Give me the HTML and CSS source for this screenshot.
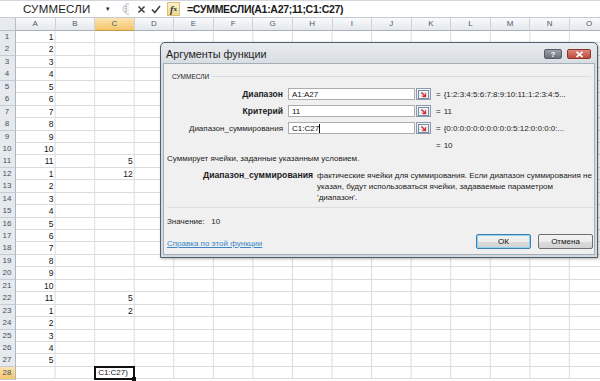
FILE: index.html
```html
<!DOCTYPE html>
<html lang="ru">
  <head>
    <meta charset="UTF-8" />
    <title>Аргументы функции</title>
    <link rel="stylesheet" href="styles.css">
  </head>
  <body>
    <div class="formula-bar">
      <div class="name-box">
        <span class="name-text">СУММЕСЛИ</span>
        <span class="name-arrow">▼</span>
      </div>
      <svg class="grip" width="12" height="14" viewBox="0 0 12 14">
        <path d="M11 1.5 A6 5.5 0 0 0 11 12.5" fill="#f1f2f4" stroke="#c3c8ce" />
        <circle cx="8" cy="4.5" r="0.8" fill="#8c949c" />
        <circle cx="8" cy="7" r="0.8" fill="#8c949c" />
        <circle cx="8" cy="9.5" r="0.8" fill="#8c949c" />
      </svg>
      <div class="fx-buttons">
        <svg class="fx-btn" width="9" height="9" viewBox="0 0 9 9">
          <path d="M1.5 1.5 L7.5 7.5 M7.5 1.5 L1.5 7.5" stroke="#3c4247" stroke-width="1.6" />
        </svg>
        <svg class="fx-btn" width="10" height="9" viewBox="0 0 10 9">
          <path d="M1 4.5 L3.8 7.5 L9 1" fill="none" stroke="#3c4247" stroke-width="1.6" />
        </svg>
        <span class="fx-box"><i>f</i><sub>x</sub></span>
      </div>
      <div class="formula">=СУММЕСЛИ(A1:A27;11;C1:C27)</div>
    </div>

    <div class="sheet">
      <div class="head-row">
        <div class="corner"></div>
        <div class="ch">A</div>
        <div class="ch">B</div>
        <div class="ch active">C</div>
        <div class="ch">D</div>
        <div class="ch">E</div>
        <div class="ch">F</div>
        <div class="ch">G</div>
        <div class="ch">H</div>
        <div class="ch">I</div>
        <div class="ch">J</div>
        <div class="ch">K</div>
        <div class="ch">L</div>
        <div class="ch">M</div>
        <div class="ch">N</div>
        <div class="ch">O</div>
      </div>
      <div class="rows">
        <div class="row"><div class="rh">1</div><div class="cell">1</div></div>
        <div class="row"><div class="rh">2</div><div class="cell">2</div></div>
        <div class="row"><div class="rh">3</div><div class="cell">3</div></div>
        <div class="row"><div class="rh">4</div><div class="cell">4</div></div>
        <div class="row"><div class="rh">5</div><div class="cell">5</div></div>
        <div class="row"><div class="rh">6</div><div class="cell">6</div></div>
        <div class="row"><div class="rh">7</div><div class="cell">7</div></div>
        <div class="row"><div class="rh">8</div><div class="cell">8</div></div>
        <div class="row"><div class="rh">9</div><div class="cell">9</div></div>
        <div class="row"><div class="rh">10</div><div class="cell">10</div></div>
        <div class="row"><div class="rh">11</div><div class="cell">11</div><div class="cell"></div><div class="cell">5</div></div>
        <div class="row"><div class="rh">12</div><div class="cell">1</div><div class="cell"></div><div class="cell">12</div></div>
        <div class="row"><div class="rh">13</div><div class="cell">2</div></div>
        <div class="row"><div class="rh">14</div><div class="cell">3</div></div>
        <div class="row"><div class="rh">15</div><div class="cell">4</div></div>
        <div class="row"><div class="rh">16</div><div class="cell">5</div></div>
        <div class="row"><div class="rh">17</div><div class="cell">6</div></div>
        <div class="row"><div class="rh">18</div><div class="cell">7</div></div>
        <div class="row"><div class="rh">19</div><div class="cell">8</div></div>
        <div class="row"><div class="rh">20</div><div class="cell">9</div></div>
        <div class="row"><div class="rh">21</div><div class="cell">10</div></div>
        <div class="row"><div class="rh">22</div><div class="cell">11</div><div class="cell"></div><div class="cell">5</div></div>
        <div class="row"><div class="rh">23</div><div class="cell">1</div><div class="cell"></div><div class="cell">2</div></div>
        <div class="row"><div class="rh">24</div><div class="cell">2</div></div>
        <div class="row"><div class="rh">25</div><div class="cell">3</div></div>
        <div class="row"><div class="rh">26</div><div class="cell">4</div></div>
        <div class="row"><div class="rh">27</div><div class="cell">5</div></div>
        <div class="row"><div class="rh active">28</div><div class="cell"></div><div class="cell"></div><div class="cell edit">C1:C27)</div></div>
      </div>
    </div>

    <div class="dialog">
      <div class="dialog-title">
        <span class="title-text">Аргументы функции</span>
        <span class="tbtn help">?</span>
        <span class="tbtn close">
          <svg width="9" height="7" viewBox="0 0 9 7">
            <path d="M1.5 0.8 L7.5 6.2 M7.5 0.8 L1.5 6.2" stroke="#fff" stroke-width="1.6" />
          </svg>
        </span>
      </div>

      <div class="panel">
        <div class="group-head"><span>СУММЕСЛИ</span><span class="group-line"></span></div>

        <div class="args">
          <label class="arg-label bold" for="range">Диапазон</label>
          <input class="arg-input" id="range" type="text" value="A1:A27" />
          <span class="ref-btn">
            <svg width="11" height="9" viewBox="0 0 11 9">
              <rect x="0.5" y="0.5" width="10" height="8" fill="#fff" stroke="#6f87a3" />
              <path d="M0.5 3.2 H10.5 M0.5 5.8 H10.5 M4 0.5 V8.5 M7.5 0.5 V8.5" stroke="#b9c7d6" stroke-width="0.7" />
              <path d="M3.5 2.5 L7.5 6.5 M7.5 3.5 V6.5 H4.5" fill="none" stroke="#d92b2b" stroke-width="1.3" />
            </svg>
          </span>
          <span class="arg-value"><span class="eq">=</span>{1:2:3:4:5:6:7:8:9:10:11:1:2:3:4:5...</span>

          <label class="arg-label bold" for="criteria">Критерий</label>
          <input class="arg-input" id="criteria" type="text" value="11" />
          <span class="ref-btn">
            <svg width="11" height="9" viewBox="0 0 11 9">
              <rect x="0.5" y="0.5" width="10" height="8" fill="#fff" stroke="#6f87a3" />
              <path d="M0.5 3.2 H10.5 M0.5 5.8 H10.5 M4 0.5 V8.5 M7.5 0.5 V8.5" stroke="#b9c7d6" stroke-width="0.7" />
              <path d="M3.5 2.5 L7.5 6.5 M7.5 3.5 V6.5 H4.5" fill="none" stroke="#d92b2b" stroke-width="1.3" />
            </svg>
          </span>
          <span class="arg-value"><span class="eq">=</span>11</span>

          <label class="arg-label" for="sum-range">Диапазон_суммирования</label>
          <div class="arg-input"><span>C1:C27</span><span class="caret"></span></div>
          <span class="ref-btn">
            <svg width="11" height="9" viewBox="0 0 11 9">
              <rect x="0.5" y="0.5" width="10" height="8" fill="#fff" stroke="#6f87a3" />
              <path d="M0.5 3.2 H10.5 M0.5 5.8 H10.5 M4 0.5 V8.5 M7.5 0.5 V8.5" stroke="#b9c7d6" stroke-width="0.7" />
              <path d="M3.5 2.5 L7.5 6.5 M7.5 3.5 V6.5 H4.5" fill="none" stroke="#d92b2b" stroke-width="1.3" />
            </svg>
          </span>
          <span class="arg-value"><span class="eq">=</span>{0:0:0:0:0:0:0:0:0:0:5:12:0:0:0:0:...</span>
        </div>

        <div class="result"><span class="eq">=</span>10</div>

        <p class="func-desc">Суммирует ячейки, заданные указанным условием.</p>

        <div class="arg-desc">
          <span class="arg-name">Диапазон_суммирования</span>
          <span class="arg-text">фактические ячейки для суммирования. Если диапазон суммирования не указан, будут использоваться ячейки, задаваемые параметром 'диапазон'.</span>
        </div>

        <div class="value-line">Значение:&nbsp;&nbsp; 10</div>

        <div class="dialog-footer">
          <a class="help-link" href="#">Справка по этой функции</a>
          <button class="btn default">ОК</button>
          <button class="btn">Отмена</button>
        </div>
      </div>
    </div>
  </body>
</html>
```

FILE: styles.css
```css
* {
  box-sizing: border-box;
}

body {
  margin: 0;
  width: 600px;
  height: 381px;
  overflow: hidden;
  position: relative;
  background: #fff;
  font-family: "Liberation Sans", Arial, sans-serif;
  color: #1c1c1c;
}

/* formula bar */
.formula-bar {
  display: flex;
  align-items: center;
  height: 18px;
  border-top: 1px solid #d3d8de;
  border-bottom: 1px solid #c4cad1;
}

.name-box {
  width: 117px;
  display: flex;
  align-items: center;
  padding-left: 23px;
  font-size: 11.5px;
  letter-spacing: 0.2px;
}

.name-text {
  flex: 1;
}

.name-arrow {
  font-size: 6px;
  color: #2c2c2c;
  margin-right: 6px;
}

.grip {
  margin-left: 1px;
}

.fx-buttons {
  display: flex;
  align-items: center;
  gap: 5px;
  margin-left: 7px;
}

.fx-box {
  width: 13px;
  height: 14px;
  background: linear-gradient(#fbf1cf, #efd98e);
  border: 1px solid #d9c27c;
  font-family: "Liberation Serif", serif;
  font-size: 10px;
  font-weight: bold;
  color: #333;
  display: flex;
  align-items: center;
  justify-content: center;
  margin-left: 1px;
}

.fx-box sub {
  font-size: 7px;
  vertical-align: -1px;
}

.formula {
  margin-left: 7px;
  font-size: 10.5px;
  font-weight: bold;
  letter-spacing: -0.3px;
  color: #1a1a1a;
}

/* sheet */
.head-row {
  display: grid;
  grid-template-columns: 16px repeat(15, 39.57px);
  height: 13px;
}

.corner {
  background: #e7eaee;
  border-right: 1px solid #b7bec6;
  border-bottom: 1px solid #b7bec6;
}

.ch {
  background: linear-gradient(#f9fafb, #e4e8ed);
  border-right: 1px solid #cdd2d8;
  border-bottom: 1px solid #a9b2bc;
  font-size: 8px;
  color: #4d5a68;
  text-align: center;
  line-height: 12px;
}

.ch.active {
  background: linear-gradient(#fbe5b2, #f4c56a);
  border-bottom-color: #c29a4a;
}

.rows {
  background-image: linear-gradient(to left, #dadcde 1px, transparent 1px);
  background-size: 39.57px 100%;
  background-position: 16px 0;
}

.row {
  display: grid;
  grid-template-columns: 16px repeat(3, 39.57px);
  height: 12.44px;
  background: linear-gradient(to top, #dadcde 1px, transparent 1px);
}

.rh {
  background: #e6e9ed;
  border-right: 1px solid #aeb6bf;
  border-bottom: 1px solid #c6ccd3;
  font-size: 8px;
  color: #44505e;
  text-align: center;
  padding-right: 1px;
  line-height: 12px;
}

.rh.active {
  background: linear-gradient(#fbe5b2, #f4c56a);
}

.cell {
  font-size: 8.5px;
  text-align: right;
  padding-right: 2px;
  line-height: 12px;
  color: #161616;
}

.cell.edit {
  position: relative;
  text-align: left;
  padding-left: 2px;
  border: 2px solid #111;
  margin: -1px 0 0 -1px;
  height: 14px;
  line-height: 10px;
  font-size: 8px;
}

.cell.edit::after {
  content: "";
  position: absolute;
  right: -3px;
  bottom: -3px;
  width: 4px;
  height: 4px;
  background: #111;
}

/* dialog */
.dialog {
  position: absolute;
  left: 160px;
  top: 42px;
  width: 438px;
  height: 216px;
  border: 1px solid #4f5f6b;
  border-radius: 5px 5px 0 0;
  background: linear-gradient(#e9ecef, #d9dee3 20px, #d3d9df);
  box-shadow: 1px 1px 3px rgba(0, 0, 0, 0.3);
  display: flex;
  flex-direction: column;
}

.dialog-title {
  height: 20px;
  display: flex;
  align-items: flex-start;
  gap: 5px;
  padding: 0 6px 0 5px;
}

.title-text {
  flex: 1;
  font-size: 10.8px;
  color: #1e1e1e;
  margin-top: 5px;
}

.tbtn {
  margin-top: 6px;
  height: 10px;
  border-radius: 2px;
  display: flex;
  align-items: center;
  justify-content: center;
  color: #fff;
  font-size: 8px;
  font-weight: bold;
}

.tbtn.help {
  width: 18px;
  background: linear-gradient(#9aa1a8, #6a7178);
  border: 1px solid #565d64;
}

.tbtn.close {
  width: 24px;
  background: linear-gradient(#d98a80, #c0493d);
  border: 1px solid #8e3128;
}

.panel {
  flex: 1;
  margin: 0 2px 2px;
  background: #f0f0f0;
  border: 1px solid #a4aeb8;
  padding: 7px 1px 0 3px;
  font-size: 8px;
}

.group-head {
  display: flex;
  align-items: center;
  gap: 3px;
  height: 10px;
  padding-left: 5px;
  font-size: 6.5px;
  color: #222;
}

.group-line {
  flex: 1;
  border-top: 1px solid #d6dde3;
  margin-right: 2px;
}

.args {
  display: grid;
  grid-template-columns: 121px 127px 16px 1fr;
  grid-auto-rows: 12px;
  row-gap: 5px;
  margin-top: 7px;
  align-items: center;
}

.arg-label {
  text-align: right;
  white-space: nowrap;
  padding-right: 5px;
}

.bold {
  font-weight: bold;
  font-size: 8.6px;
}

.arg-input {
  height: 12px;
  width: 127px;
  border: 1px solid #abadb3;
  background: #fff;
  font: inherit;
  padding: 0 3px;
  display: flex;
  align-items: center;
  color: #111;
  outline: none;
}

.caret {
  width: 1px;
  height: 9px;
  background: #000;
}

.ref-btn {
  height: 12px;
  margin-left: 1px;
  border: 1px solid #8c99a7;
  background: linear-gradient(#f4f6f8, #dde3e9);
  display: flex;
  align-items: center;
  justify-content: center;
}

.arg-value {
  white-space: nowrap;
  overflow: hidden;
  padding-left: 5px;
}

.eq {
  margin-right: 3px;
}

.result {
  height: 10px;
  line-height: 10px;
  margin: 7px 0 0 269px;
}

.func-desc {
  margin: 2px 0 0;
  line-height: 11px;
}

.arg-desc {
  display: flex;
  gap: 4px;
  margin-top: 6px;
  padding-left: 36px;
  line-height: 11px;
  padding-bottom: 4px;
  border-bottom: 1px solid #d9dee3;
}

.arg-name {
  font-weight: bold;
  font-size: 8.7px;
  white-space: nowrap;
}

.arg-text {
  flex: 1;
}

.value-line {
  margin-top: 9px;
  height: 10px;
  line-height: 10px;
}

.dialog-footer {
  display: flex;
  align-items: center;
  gap: 7px;
  margin-top: 7px;
}

.help-link {
  flex: 1;
  color: #3d86c6;
  margin-top: 3px;
}

.btn {
  height: 15px;
  width: 55px;
  font-family: inherit;
  font-size: 8px;
  padding: 0;
  color: #111;
  border: 1px solid #707070;
  border-radius: 2px;
  background: linear-gradient(#f3f3f3, #ebebeb 50%, #dcdcdc 51%, #d2d2d2);
}

.btn.default {
  border-color: #3c7fb1;
  box-shadow: inset 0 0 0 1px #8fd3f1;
}
```
